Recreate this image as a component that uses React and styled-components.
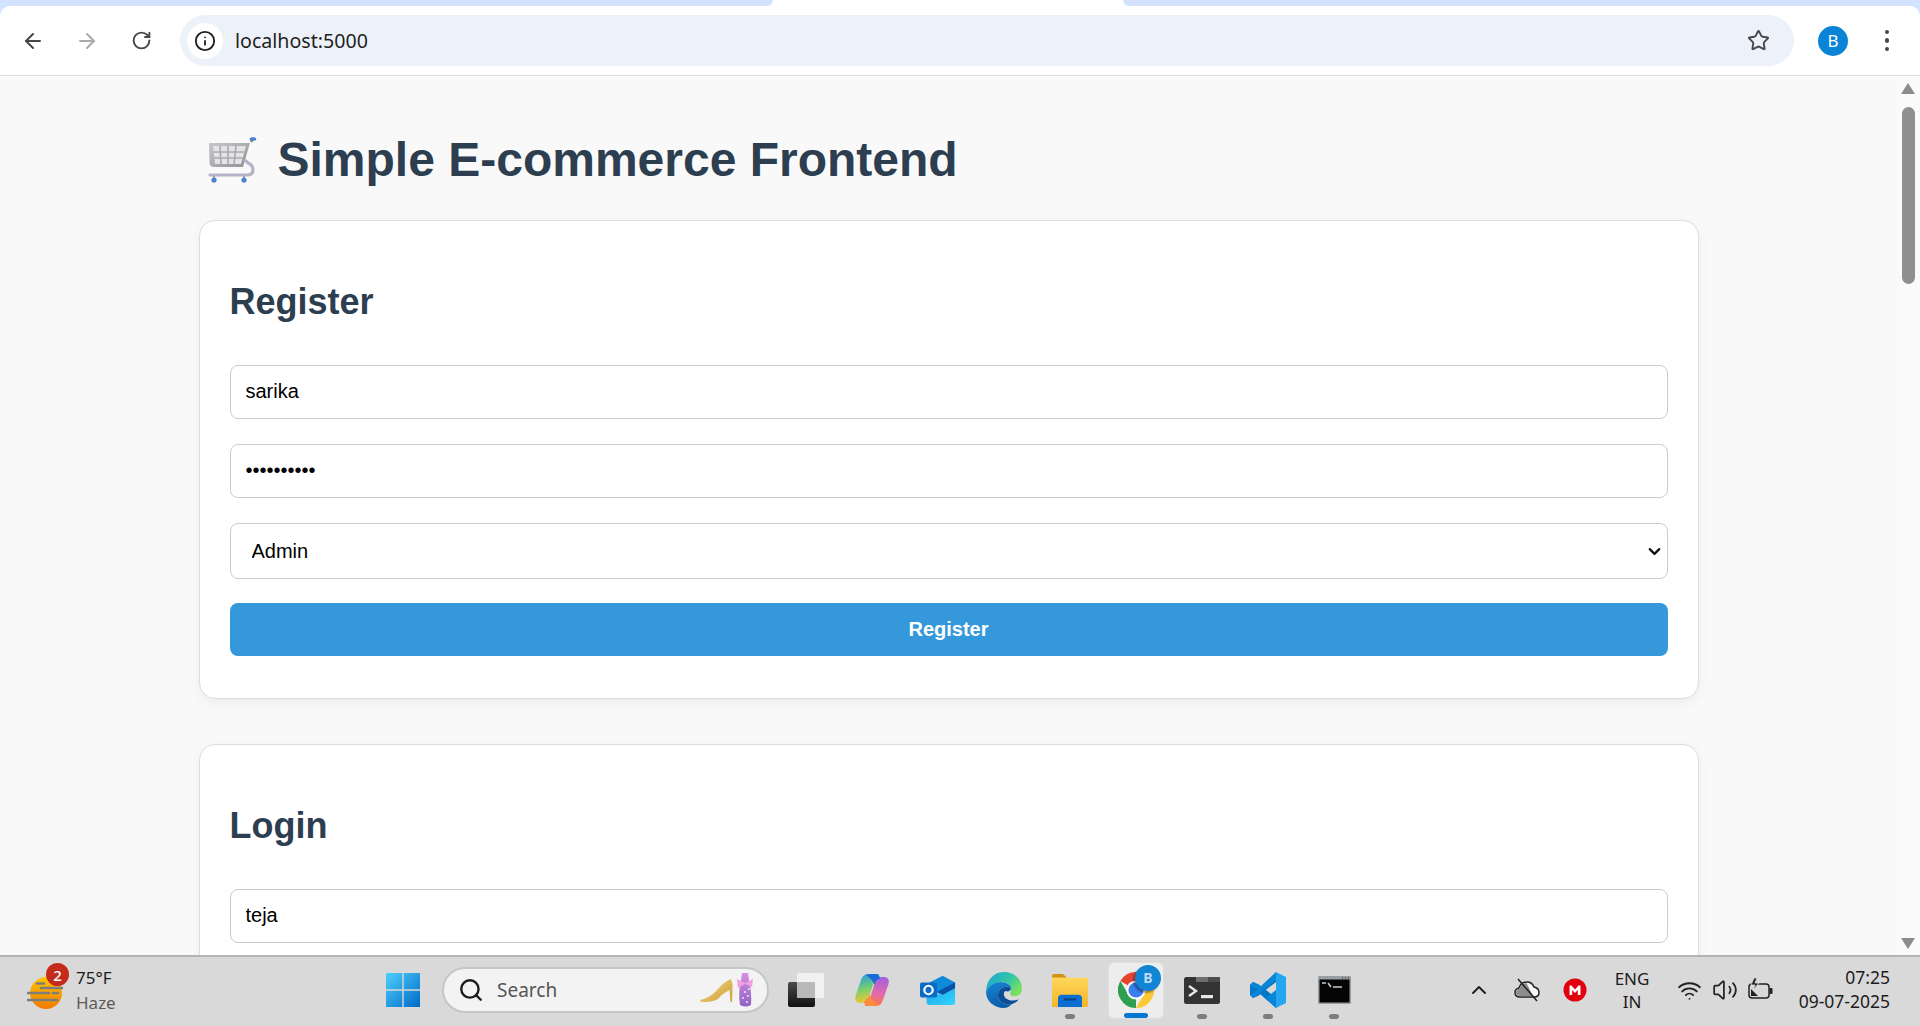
import React from 'react';
import styled, { createGlobalStyle } from 'styled-components';
import { ArrowLeft, ArrowRight, RotateCw, Info, Star, Search, ChevronUp, ChevronDown, Wifi, Volume2 } from 'lucide-react';

const GlobalStyle = createGlobalStyle`
  html, body {
    margin: 0;
    padding: 0;
    height: 100%;
    overflow: hidden;
  }
  * {
    box-sizing: border-box;
  }
`;

const uiFont = `'Noto Sans', 'Open Sans', sans-serif`;
const pageFont = `'Liberation Sans', Arial, sans-serif`;

const CartIcon = () => (
  <svg width="54" height="48" viewBox="0 0 54 48">
    <defs>
      <linearGradient id="cartBody" x1="0" y1="0" x2="1" y2="1">
        <stop offset="0" stopColor="#c9c9cc" />
        <stop offset="1" stopColor="#8f8f95" />
      </linearGradient>
    </defs>
    <path d="M46 6 L48 2" stroke="#8e8e96" strokeWidth="3" />
    <ellipse cx="48" cy="3" rx="3.4" ry="1.8" fill="#4a7fcb" />
    <path d="M4 7 H45 L38 31 H9 Q5 31 4.5 27 Z" fill="url(#cartBody)" />
    <path d="M8 10 H41 L36 28 H10 Z" fill="#e4e4e6" />
    <path d="M15 10 L16 28 M23 10 V28 M31 10 L29 28 M8.5 16 H39.5 M9 22 H37.5" stroke="#a9a9ae" strokeWidth="1.6" />
    <path d="M41 25 L43 27 Q48 29 48 34 Q48 39 42 39 H5" fill="none" stroke="#b8b2c8" strokeWidth="3.2" strokeLinecap="round" />
    <circle cx="9" cy="44" r="2.6" fill="#4a7fcb" />
    <circle cx="39" cy="44" r="2.6" fill="#4a7fcb" />
    <path d="M9 40 V42 M39 40 V42" stroke="#8e8e96" strokeWidth="1.5" />
  </svg>
);

const WeatherIcon = () => (
  <svg width="36" height="36" viewBox="0 0 36 36">
    <defs>
      <linearGradient id="sunFill" x1="0" y1="0" x2="0" y2="1">
        <stop offset="0" stopColor="#ffc800" />
        <stop offset="1" stopColor="#f07a00" />
      </linearGradient>
    </defs>
    <circle cx="19" cy="18" r="16" fill="url(#sunFill)" />
    <g stroke="#7d7d7d" strokeWidth="2.6" strokeLinecap="round">
      <path d="M10 8.5 H17" />
      <path d="M14 13 H35" />
      <path d="M1 18 H22 M26 18 H31" />
      <path d="M1 25 H30" />
    </g>
  </svg>
);

const WindowsLogo = () => (
  <svg width="36" height="36" viewBox="0 0 36 36">
    <defs>
      <linearGradient id="winFill" x1="0" y1="0" x2="1" y2="1">
        <stop offset="0" stopColor="#4fd0fb" />
        <stop offset="1" stopColor="#0069c8" />
      </linearGradient>
    </defs>
    <path d="M1 1 H17.3 V17.3 H1 Z M18.7 1 H35 V17.3 H18.7 Z M1 18.7 H17.3 V35 H1 Z M18.7 18.7 H35 V35 H18.7 Z" fill="url(#winFill)" />
  </svg>
);

const SearchArt = () => (
  <svg width="56" height="36" viewBox="0 0 56 36">
    <defs>
      <linearGradient id="shoeFill" x1="0" y1="0" x2="1" y2="1">
        <stop offset="0" stopColor="#f0d57e" />
        <stop offset="1" stopColor="#cf9f3c" />
      </linearGradient>
      <linearGradient id="dressFill" x1="0" y1="0" x2="0" y2="1">
        <stop offset="0" stopColor="#d58ee0" />
        <stop offset="1" stopColor="#8e63c4" />
      </linearGradient>
    </defs>
    <path d="M1 28 Q11 26 18 18 Q26 9 32 7 Q34 11 33.5 17 L33 30 L31.5 30 L30.5 18 Q24 21 19 27 Q14 30 5 30 Q1 30 1 28 Z" fill="url(#shoeFill)" />
    <path d="M43 1 H49 L50 8 Q53 20 52 33 Q47 36 41 33 Q39 20 42 8 Z" fill="url(#dressFill)" />
    <path d="M38 7 L46 11 L54 7 L53 15 L46 12 L39 16 Z" fill="#ee9fe0" />
    <g fill="#f1e6fa">
      <circle cx="46" cy="20" r="1" />
      <circle cx="49" cy="24" r="1" />
      <circle cx="44" cy="26" r="1" />
      <circle cx="48" cy="30" r="1" />
      <circle cx="50" cy="17" r="1" />
    </g>
  </svg>
);

const TaskViewIcon = () => (
  <svg width="36" height="34" viewBox="0 0 36 34">
    <defs>
      <linearGradient id="tvDark" x1="0" y1="0" x2="0" y2="1">
        <stop offset="0" stopColor="#4b4b4b" />
        <stop offset="1" stopColor="#111" />
      </linearGradient>
    </defs>
    <rect x="0" y="9" width="27" height="25" rx="2" fill="url(#tvDark)" />
    <rect x="9" y="0" width="27" height="25" rx="2" fill="#f4f4f4" fillOpacity="0.85" />
    <rect x="9" y="9" width="18" height="16" rx="1" fill="#b9b9b9" />
  </svg>
);

const CopilotIcon = () => (
  <svg width="36" height="36" viewBox="0 0 36 36">
    <defs>
      <linearGradient id="coA" x1="0.2" y1="0" x2="0.4" y2="1">
        <stop offset="0" stopColor="#1f9ce8" />
        <stop offset="0.55" stopColor="#7ccf68" />
        <stop offset="1" stopColor="#f7c52f" />
      </linearGradient>
      <linearGradient id="coB" x1="0.6" y1="0" x2="0.5" y2="1">
        <stop offset="0" stopColor="#a35fe0" />
        <stop offset="0.6" stopColor="#e46ca8" />
        <stop offset="1" stopColor="#fb7d3c" />
      </linearGradient>
    </defs>
    <path d="M7 8 Q9 2 14 2 H25 L24 9 Q20 9 19 13 L14.5 27 Q13 31 8 31 H6 Q0 31 1.5 24 Z" fill="url(#coA)" />
    <path d="M29 28 Q27 34 22 34 H11 L12 27 Q16 27 17 23 L21.5 9 Q23 5 28 5 H30 Q36 5 34.5 12 Z" fill="url(#coB)" />
    <path d="M12 3 Q14 2 17 2 H22 Q26 3 26 7 Q23 6.5 22 9 L20.5 13 Q19 8 12 3 Z" fill="#1a6ad6" />
    <path d="M24 33 Q22 34 19 34 H14 Q10 33 10 29 Q13 29.5 14 27 L15.5 23 Q17 28 24 33 Z" fill="#ff8a3c" />
  </svg>
);

const OutlookIcon = () => (
  <svg width="36" height="30" viewBox="0 0 38 36" preserveAspectRatio="none">
    <defs>
      <linearGradient id="olFront" x1="0" y1="0" x2="1" y2="1">
        <stop offset="0" stopColor="#1aa5e8" />
        <stop offset="1" stopColor="#35d4ff" />
      </linearGradient>
    </defs>
    <path d="M10 9 L24 1 L37 9 V16 L24 24 L10 18 Z" fill="#0f8ad8" />
    <path d="M18 20 L37 9 V16 L24 24 Z" fill="#0a52a8" />
    <path d="M7 32 V20 L24 24 L37 16 V33 Q37 36 34 36 H11 Q7 36 7 32 Z" fill="url(#olFront)" />
    <rect x="0" y="9" width="18" height="18" rx="2" fill="#0a6cc6" />
    <ellipse cx="9" cy="18" rx="4.4" ry="5" fill="none" stroke="#fff" strokeWidth="2.4" />
  </svg>
);

const EdgeIcon = () => (
  <svg width="36" height="36" viewBox="0 0 36 36">
    <defs>
      <linearGradient id="edgeA" x1="0" y1="0" x2="1" y2="0.6">
        <stop offset="0" stopColor="#1aa3d8" />
        <stop offset="0.6" stopColor="#32c6a6" />
        <stop offset="1" stopColor="#7be05e" />
      </linearGradient>
      <linearGradient id="edgeB" x1="0" y1="0" x2="0.4" y2="1">
        <stop offset="0" stopColor="#1787d8" />
        <stop offset="1" stopColor="#0b5ea8" />
      </linearGradient>
    </defs>
    <path d="M18 0 C29 0 36 8 36 17 C36 23 30 25 26 24 C23 23 25 20 25 18 C25 13 20 9 14 10 C8 11 3 14 0 20 C0 9 7 0 18 0 Z" fill="url(#edgeA)" />
    <path d="M0 20 C3 13 9 10 15 10 C20 10 25 13 25 16 C21 13 13 15 12 22 C11 29 19 34 26 32 C23 35 20 36 18 36 C8 36 0 29 0 20 Z" fill="url(#edgeB)" />
    <path d="M12 22 C13 15 21 13 25 16 C25 19 22 20 20 19 C17 19 17 25 21 27 C24 29 30 29 33 27 C31 30 29 31 26 32 C19 34 11 29 12 22 Z" fill="#0d4f96" />
  </svg>
);

const FolderIcon = () => (
  <svg width="36" height="33" viewBox="0 0 36 35" preserveAspectRatio="none">
    <defs>
      <linearGradient id="folderFill" x1="0" y1="0" x2="0" y2="1">
        <stop offset="0" stopColor="#ffd75a" />
        <stop offset="1" stopColor="#f3b52c" />
      </linearGradient>
    </defs>
    <path d="M0 2 Q0 0 2 0 H11 L15 4 H0 Z" fill="#d19410" />
    <path d="M0 4 H35 Q36 4 36 5 V34 Q36 35 35 35 H0 Z" fill="url(#folderFill)" />
    <path d="M6 35 V26 Q6 22 10 22 H26 Q30 22 30 26 V35 Z" fill="#0a6fd0" />
    <rect x="12" y="26" width="12" height="2" fill="#0b3f80" />
  </svg>
);

const ChromeIcon = () => (
  <svg width="36" height="36" viewBox="0 0 36 36">
    <path d="M18 0 A18 18 0 0 1 33.6 9 H18 A9 9 0 0 0 10.2 13.5 L2.4 9 A18 18 0 0 1 18 0 Z" fill="#e8432e" />
    <path d="M33.6 9 A18 18 0 0 1 18 36 L25.8 22.5 A9 9 0 0 0 25.8 13.5 Z M33.6 9 H18" fill="#fcc934" />
    <path d="M2.4 9 L10.2 22.5 A9 9 0 0 0 18 27 L18 36 A18 18 0 0 1 2.4 9 Z" fill="#2f9e4f" />
    <circle cx="18" cy="18" r="9.6" fill="#fff" />
    <circle cx="18" cy="18" r="7.6" fill="#3b7ef0" />
  </svg>
);

const TerminalIcon = () => (
  <svg width="36" height="27" viewBox="0 0 36 27">
    <rect x="0" y="0" width="36" height="27" rx="2.5" fill="#333" />
    <rect x="12" y="0" width="12" height="5" fill="#6e6e6e" />
    <rect x="24" y="0" width="12" height="5" fill="#4c4c4c" />
    <path d="M5 9 L12 14 L5 19" fill="none" stroke="#e6e6e6" strokeWidth="2.4" />
    <rect x="17" y="18" width="12" height="3.2" fill="#e6e6e6" />
  </svg>
);

const VsCodeIcon = () => (
  <svg width="36" height="36" viewBox="0 0 36 36">
    <path d="M26 0 L36 5 V31 L26 36 Z" fill="#24a7f0" />
    <path d="M26 0 V10 L8 24 L3 26 L0 23 V13 L3 10 L8 12 L16 18 L26 26 V36 L10 22 Z" fill="#0078c8" />
    <path d="M26 0 L10 15 L3 10 L0 13 L8 18 L0 23 L3 26 L26 8 Z" fill="#0a86d8" />
    <path d="M26 36 L16 26 L26 18 Z" fill="#0a86d8" />
  </svg>
);

const CmdIcon = () => (
  <svg width="33" height="28" viewBox="0 0 33 28">
    <rect x="0" y="0" width="33" height="28" rx="1" fill="#9a9fa6" />
    <rect x="1.5" y="3.5" width="30" height="23" fill="#050505" />
    <path d="M4 7 H8 M10 7 L13 11 M15 11 H24" stroke="#c9c9c9" strokeWidth="1.5" />
    <path d="M24 2 H25 M27 2 H28 M30 2 H31" stroke="#444" strokeWidth="1.4" />
  </svg>
);

const CloudOffIcon = () => (
  <svg width="26" height="24" viewBox="0 0 26 24">
    <path d="M6 19 Q1 19 1 14.5 Q1 11 5 10 Q7 4 13 4 Q18 4 20 9 Q25 10 25 14.5 Q25 19 20 19 Z" fill="#fafafa" stroke="#222" strokeWidth="1.5" />
    <path d="M6 18 Q2 18 2 14.5 Q2 11.5 5.5 10.8 Q7.5 5 12.5 5 L19 18 Z" fill="#8d8d8d" />
    <path d="M4 1 L23 23" stroke="#222" strokeWidth="1.5" />
  </svg>
);

const MegaIcon = () => (
  <svg width="24" height="24" viewBox="0 0 24 24">
    <circle cx="12" cy="12" r="11.5" fill="#e2000f" />
    <path d="M6.5 17 V7.5 H8.5 L12 11.5 L15.5 7.5 H17.5 V17 H14.8 V12 L12 15 L9.2 12 V17 Z" fill="#fff" />
  </svg>
);

const BatteryIcon = () => (
  <svg width="26" height="24" viewBox="0 0 26 24">
    <rect x="1" y="6" width="20" height="14" rx="3" fill="none" stroke="#222" strokeWidth="1.5" />
    <rect x="21.5" y="10" width="3" height="6" rx="1" fill="#222" />
    <path d="M3 18 V11 L10 18 Z" fill="#222" />
    <path d="M6 0 L3 7 H7 L5 12 L11 5 H7 L9 0 Z" fill="#222" stroke="#dcdcdc" strokeWidth="0.8" />
  </svg>
);

const taskbarApps = [
  { id: 'taskview', icon: <TaskViewIcon /> },
  { id: 'copilot', icon: <CopilotIcon /> },
  { id: 'outlook', icon: <OutlookIcon /> },
  { id: 'edge', icon: <EdgeIcon /> },
  { id: 'folder', icon: <FolderIcon />, running: true },
  { id: 'chrome', icon: <ChromeIcon />, active: true },
  { id: 'terminal', icon: <TerminalIcon />, running: true },
  { id: 'vscode', icon: <VsCodeIcon />, running: true },
  { id: 'cmd', icon: <CmdIcon />, running: true },
];

const RegisterCard = () => (
  <Card>
    <CardTitle>Register</CardTitle>
    <Form>
      <TextInput type="text" value="sarika" readOnly />
      <TextInput type="password" value="**********" readOnly />
      <SelectWrapper>
        <RoleSelect defaultValue="admin">
          <option value="admin">Admin</option>
          <option value="customer">Customer</option>
        </RoleSelect>
        <SelectArrow>
          <ChevronDown size={19} strokeWidth={2.8} color="#111" />
        </SelectArrow>
      </SelectWrapper>
      <SubmitButton type="button">Register</SubmitButton>
    </Form>
  </Card>
);

const LoginCard = () => (
  <Card>
    <CardTitle>Login</CardTitle>
    <Form>
      <TextInput type="text" value="teja" readOnly />
    </Form>
  </Card>
);

const App = () => (
  <>
    <GlobalStyle />
    <Screen>
      <TabStrip>
        <TabGap $side="left" />
        <ActiveTab />
        <TabGap $side="right" />
      </TabStrip>
      <ToolbarBack>
        <Toolbar>
          <NavButton><ArrowLeft size={24} strokeWidth={2} color="#474747" /></NavButton>
          <NavButton><ArrowRight size={24} strokeWidth={2} color="#ababab" /></NavButton>
          <NavButton><RotateCw size={21} strokeWidth={2.2} color="#474747" /></NavButton>
          <Omnibox>
            <SiteInfo><Info size={22} strokeWidth={2} color="#1f1f1f" /></SiteInfo>
            <UrlText>localhost:5000</UrlText>
            <Star size={23} strokeWidth={2} color="#474747" />
          </Omnibox>
          <Avatar>B</Avatar>
          <MenuDots>
            <i />
            <i />
            <i />
          </MenuDots>
        </Toolbar>
      </ToolbarBack>
      <Viewport>
        <Page>
          <Container>
            <Heading>
              <CartIcon />
              Simple E-commerce Frontend
            </Heading>
            <RegisterCard />
            <LoginCard />
          </Container>
        </Page>
        <Scrollbar>
          <ScrollArrow $up />
          <ScrollThumb />
          <ScrollArrow />
        </Scrollbar>
      </Viewport>
      <Taskbar>
        <Weather>
          <WeatherArt>
            <WeatherIcon />
            <WeatherBadge>2</WeatherBadge>
          </WeatherArt>
          <WeatherText>
            <Temp>75°F</Temp>
            <Haze>Haze</Haze>
          </WeatherText>
        </Weather>
        <StartTile><WindowsLogo /></StartTile>
        <SearchPill>
          <Search size={26} strokeWidth={2.2} color="#1c1c1c" />
          <SearchLabel>Search</SearchLabel>
          <SearchArt />
        </SearchPill>
        {taskbarApps.map((app) => (
          <AppTile key={app.id} $active={app.active}>
            {app.icon}
            {app.active && <ChromeBadge>B</ChromeBadge>}
            {app.running && <RunDot />}
            {app.active && <ActiveBar />}
          </AppTile>
        ))}
        <Tray>
          <TraySlot $w={48}><ChevronUp size={24} strokeWidth={2} color="#222" /></TraySlot>
          <TraySlot $w={48}><CloudOffIcon /></TraySlot>
          <TraySlot $w={48}><MegaIcon /></TraySlot>
          <Lang>
            <span>ENG</span>
            <span>IN</span>
          </Lang>
          <TraySlot $w={38}><Wifi size={25} strokeWidth={1.8} color="#222" /></TraySlot>
          <TraySlot $w={34}><Volume2 size={26} strokeWidth={1.6} color="#222" /></TraySlot>
          <TraySlot $w={38}><BatteryIcon /></TraySlot>
          <Clock>
            <span>07:25</span>
            <span>09-07-2025</span>
          </Clock>
        </Tray>
      </Taskbar>
    </Screen>
  </>
);

export default App;

const Screen = styled.div`
  width: 1920px;
  height: 1026px;
  display: flex;
  flex-direction: column;
  overflow: hidden;
  font-family: ${uiFont};
`;

const TabStrip = styled.div`
  height: 6px;
  flex: none;
  display: flex;
  background: #fff;
`;

const TabGap = styled.div`
  flex: ${({ $side }) => ($side === 'left' ? '0 0 773px' : '1')};
  background: #d3e3fd;
  border-bottom-${({ $side }) => ($side === 'left' ? 'right' : 'left')}-radius: 8px;
`;

const ActiveTab = styled.div`
  width: 350px;
`;

const ToolbarBack = styled.div`
  flex: none;
  background: linear-gradient(#d3e3fd, #d3e3fd) left top / 100% 12px no-repeat;
`;

const Toolbar = styled.div`
  height: 70px;
  display: flex;
  align-items: center;
  padding: 0 0 0 11px;
  background: #fff;
  border-radius: 10px 10px 0 0;
  border-bottom: 1px solid #dcdcdc;
`;

const NavButton = styled.div`
  width: 44px;
  height: 44px;
  margin-right: 10px;
  display: flex;
  align-items: center;
  justify-content: center;
`;

const Omnibox = styled.div`
  width: 1614px;
  height: 51px;
  margin-left: 7px;
  padding: 0 24px 0 7px;
  display: flex;
  align-items: center;
  background: #edf2fa;
  border-radius: 26px;
`;

const SiteInfo = styled.div`
  width: 36px;
  height: 36px;
  border-radius: 50%;
  background: #fff;
  display: flex;
  align-items: center;
  justify-content: center;
`;

const UrlText = styled.div`
  flex: 1;
  margin-left: 12px;
  font-size: 19.6px;
  color: #1f1f1f;
`;

const Avatar = styled.div`
  width: 30px;
  height: 30px;
  margin-left: 24px;
  border-radius: 50%;
  background: #0a84d6;
  color: #fff;
  font-size: 17px;
  display: flex;
  align-items: center;
  justify-content: center;
`;

const MenuDots = styled.div`
  width: 12px;
  margin-left: 33px;
  display: flex;
  flex-direction: column;
  align-items: center;
  gap: 4px;

  i {
    width: 4.6px;
    height: 4.6px;
    border-radius: 50%;
    background: #474747;
  }
`;

const Viewport = styled.div`
  flex: 1;
  min-height: 0;
  display: flex;
`;

const Page = styled.main`
  flex: 1;
  min-width: 0;
  overflow: hidden;
  background: #f9f9f9;
  font-family: ${pageFont};
`;

const Container = styled.div`
  width: 1500px;
  margin: 0 auto;
  padding-top: 56px;
`;

const Heading = styled.h1`
  height: 55px;
  margin: 0 0 33px;
  padding-left: 6px;
  display: flex;
  align-items: center;
  gap: 19px;
  font-size: 48px;
  font-weight: 700;
  color: #2c3e50;
`;

const Card = styled.section`
  margin-bottom: 45px;
  padding: 30px 30px 42px;
  background: #fff;
  border: 1px solid #ddd;
  border-radius: 16px;
  box-shadow: 0 4px 12px rgba(0, 0, 0, 0.05);
`;

const CardTitle = styled.h2`
  margin: 30px 0 43px;
  font-size: 36px;
  line-height: 41px;
  font-weight: 700;
  color: #2c3e50;
`;

const Form = styled.form`
  display: flex;
  flex-direction: column;
  gap: 25px;
`;

const TextInput = styled.input`
  height: 54px;
  width: 100%;
  padding: 0 15px 2px;
  background: #fff;
  border: 1px solid #ccc;
  border-radius: 8px;
  outline: none;
  font-family: ${pageFont};
  font-size: 20px;
  color: #000;
`;

const SelectWrapper = styled.div`
  position: relative;
  margin-bottom: -1px;
`;

const RoleSelect = styled.select`
  display: block;
  height: 56px;
  width: 100%;
  padding: 0 21px;
  appearance: none;
  background: #fff;
  border: 1px solid #ccc;
  border-radius: 8px;
  outline: none;
  font-family: ${pageFont};
  font-size: 20px;
  color: #000;
`;

const SelectArrow = styled.span`
  position: absolute;
  right: 2px;
  top: 19px;
  width: 22px;
  height: 18px;
  display: flex;
  align-items: center;
  justify-content: center;
  pointer-events: none;
`;

const SubmitButton = styled.button`
  height: 53px;
  width: 100%;
  background: #3498db;
  border: none;
  border-radius: 8px;
  color: #fff;
  font-family: ${pageFont};
  font-size: 20px;
  font-weight: 700;
`;

const Scrollbar = styled.div`
  width: 23px;
  flex: none;
  padding: 7px 0 6px;
  background: #fafafa;
  display: flex;
  flex-direction: column;
  align-items: center;
  position: relative;
`;

const ScrollArrow = styled.div`
  width: 0;
  height: 0;
  margin-left: -1px;
  border-left: 7.5px solid transparent;
  border-right: 7.5px solid transparent;
  ${({ $up }) => ($up ? 'border-bottom: 11px solid #8c8c8c;' : 'border-top: 11px solid #8c8c8c; margin-top: auto;')}
`;

const ScrollThumb = styled.div`
  width: 13px;
  height: 177px;
  margin-top: 13px;
  margin-left: -1px;
  border-radius: 7px;
  background: #8f8f8f;
`;

const Taskbar = styled.footer`
  height: 71px;
  flex: none;
  padding-bottom: 3px;
  display: flex;
  align-items: center;
  background: #d9d9d9;
  border-top: 2px solid #b4b4b4;
`;

const Weather = styled.div`
  width: 370px;
  flex: none;
  padding-left: 27px;
  display: flex;
  align-items: center;
  gap: 13px;
`;

const WeatherArt = styled.div`
  position: relative;
  width: 36px;
  height: 36px;
  margin-top: 6px;
`;

const WeatherBadge = styled.span`
  position: absolute;
  top: -12px;
  right: -6px;
  width: 23px;
  height: 23px;
  border-radius: 50%;
  background: #c42b1c;
  color: #fff;
  font-size: 15px;
  font-weight: 500;
  display: flex;
  align-items: center;
  justify-content: center;
`;

const WeatherText = styled.div`
  display: flex;
  flex-direction: column;
  gap: 1px;
  line-height: 24px;
`;

const Temp = styled.span`
  font-size: 17px;
  color: #1c1c1c;
`;

const Haze = styled.span`
  font-size: 17px;
  color: #5c5c5c;
`;

const StartTile = styled.div`
  width: 66px;
  flex: none;
  display: flex;
  align-items: center;
  justify-content: center;
`;

const SearchPill = styled.div`
  width: 327px;
  height: 46px;
  flex: none;
  margin: 0 4px 0 6px;
  padding: 0 12px 0 14px;
  display: flex;
  align-items: center;
  background: #f3f3f3;
  border: 2px solid #c6c6c6;
  border-radius: 23px;
`;

const SearchLabel = styled.span`
  flex: 1;
  margin-left: 13px;
  font-size: 19px;
  color: #555;
`;

const AppTile = styled.div`
  position: relative;
  width: 66px;
  height: 57px;
  flex: none;
  display: flex;
  align-items: center;
  justify-content: center;

  ${({ $active }) =>
    $active &&
    `
    &::before {
      content: '';
      position: absolute;
      left: 5px;
      right: 5px;
      top: 0;
      bottom: 0;
      background: #ededed;
      border: 1px solid #dedede;
      border-radius: 6px;
    }
    > svg {
      position: relative;
    }
  `}
`;

const ChromeBadge = styled.span`
  position: absolute;
  top: 3px;
  right: 8px;
  width: 26px;
  height: 26px;
  border-radius: 50%;
  background: #1284d4;
  box-shadow: -2px 2px 2px rgba(0, 0, 0, 0.35);
  color: #bcdcf6;
  font-size: 14px;
  font-weight: 700;
  display: flex;
  align-items: center;
  justify-content: center;
`;

const RunDot = styled.span`
  position: absolute;
  left: 28px;
  bottom: 0;
  width: 10px;
  height: 5px;
  border-radius: 3px;
  background: #7e7e7e;
`;

const ActiveBar = styled.span`
  position: absolute;
  left: 21px;
  bottom: 1px;
  width: 24px;
  height: 5px;
  border-radius: 3px;
  background: #0078d4;
`;

const Tray = styled.div`
  margin-left: auto;
  padding-right: 30px;
  display: flex;
  align-items: center;
`;

const TraySlot = styled.div`
  width: ${({ $w }) => $w}px;
  display: flex;
  align-items: center;
  justify-content: center;
`;

const Lang = styled.div`
  width: 66px;
  margin-right: 5px;
  display: flex;
  flex-direction: column;
  align-items: center;
  font-size: 17px;
  line-height: 23px;
  color: #1c1c1c;
`;

const Clock = styled.div`
  width: 110px;
  margin-bottom: 2px;
  display: flex;
  flex-direction: column;
  align-items: flex-end;
  font-size: 17.5px;
  line-height: 24px;
  color: #1c1c1c;
`;
